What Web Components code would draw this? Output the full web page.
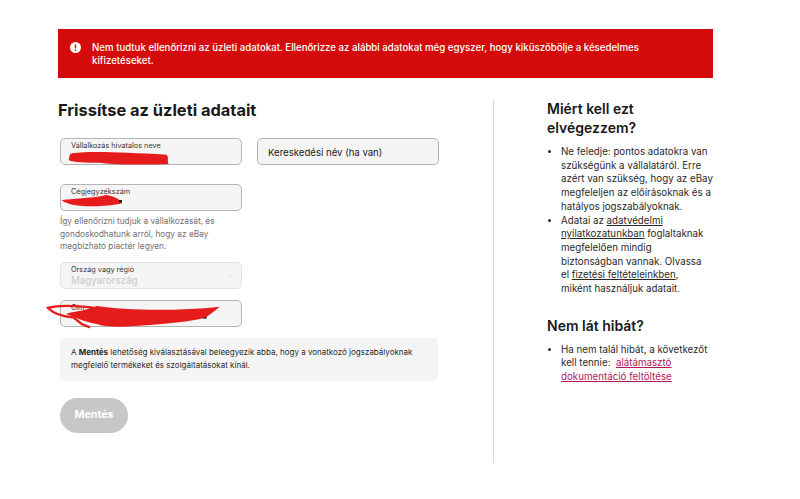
<!DOCTYPE html>
<html lang="hu"><head><meta charset="utf-8"><title>Frissítse az üzleti adatait</title>
<style>
html,body{margin:0;padding:0;background:#fff;}
body{font-family:Inter,"Liberation Sans",sans-serif;color:#191919;width:800px;height:499px;overflow:hidden;}
</style></head><body>
<biz-page>
  <error-banner>Nem tudtuk ellenőrizni az üzleti adatokat. Ellenőrizze az alábbi adatokat még egyszer, hogy kiküszöbölje a késedelmes kifizetéseket.</error-banner>
  <form-pane slot="form"></form-pane>
  <side-pane slot="side"></side-pane>
</biz-page>
<script>
function def(name, html){
  customElements.define(name, class extends HTMLElement{
    constructor(){super();const r=this.attachShadow({mode:'open'});r.innerHTML=html;}
  });
}
def('biz-page',`<style>
:host{display:block;box-sizing:border-box;width:800px;height:499px;padding:29px 87px 0 58px;}
.cols{display:flex;margin-top:22px;}
.l{width:435px;flex:none;}
.r{border-left:1px solid #d8d8d8;padding-left:53px;height:363px;width:166px;flex:none;}
</style><slot></slot><div class="cols"><div class="l"><slot name="form"></slot></div><div class="r"><slot name="side"></slot></div></div>`);
def('error-banner',`<style>
:host{display:flex;box-sizing:border-box;background:#d50b0b;color:#fff;height:49px;padding:12px 20px 0 12px;font-size:9.67px;line-height:12.5px;font-weight:500;}
svg{flex:none;width:11px;height:11px;margin-right:11px;margin-top:1px;}
.t{margin-top:1px;}
</style><svg viewBox="0 0 11 11"><circle cx="5.5" cy="5.5" r="5.5" fill="#fff"/><rect x="4.8" y="2.2" width="1.4" height="4.2" rx=".7" fill="#d50b0b"/><circle cx="5.5" cy="8" r=".85" fill="#d50b0b"/></svg><div class="t"><slot></slot></div>`);
def('text-field',`<style>
:host{display:block;box-sizing:border-box;position:relative;width:182px;height:27px;background:#f5f5f5;border:1px solid #b4b4b4;border-radius:5px;padding:2px 10px 0 10px;}
:host([disabled]){border-color:#e3e3e3;}
.lab{display:block;font-size:7.3px;line-height:9px;color:#363636;}
.val{display:block;font-size:9.8px;line-height:12px;margin-top:1px;color:#c7c7c7;}
:host([plain]){padding-top:1px;}
:host([plain]) .lab{font-size:9.6px;line-height:25px;color:#191919;}
:host([plain]) .val{display:none;}
</style><span class="lab"><slot name="label"></slot></span><span class="val"><slot></slot></span><slot name="icon"></slot>`);
def('form-pane',`<style>
:host{display:block;}
h1{margin:0;font-size:16.4px;line-height:20px;font-weight:700;color:#191919;}
.fields{position:relative;margin-top:18px;}
.row{display:flex;gap:15px;}
.f{margin-left:2px;}
.help{margin:4px 0 0 2px;width:184px;font-size:8.3px;line-height:12.6px;color:#707070;}
.note{box-sizing:border-box;width:378px;height:43px;margin:11px 0 0 2px;background:#f5f5f5;border-radius:5px;padding:8px 11px 0;font-size:8px;line-height:13.6px;color:#292929;}
.note b{font-weight:700;}
button{display:block;margin:17px 0 0 2px;width:68px;height:35px;border:0;border-radius:18px;background:#c7c7c7;color:#fff;font:700 10.7px Inter,"Liberation Sans",sans-serif;padding:0 0 2px;}
.scr{position:absolute;left:0;top:0;width:260px;height:200px;overflow:visible;pointer-events:none;}
</style>
<h1>Frissítse az üzleti adatait</h1>
<div class="fields">
<div class="row f"><text-field><span slot="label">Vállalkozás hivatalos neve</span></text-field><text-field plain><span slot="label">Kereskedési név (ha van)</span></text-field></div>
<div class="row f" style="margin-top:19px"><text-field><span slot="label">Cégjegyzékszám</span></text-field></div>
<p class="help">Így ellenőrizni tudjuk a vállalkozását, és gondoskodhatunk arról, hogy az eBay megbízható piactér legyen.</p>
<div class="f" style="margin-top:9px"><text-field disabled><span slot="label">Ország vagy régió</span>Magyarország<svg slot="icon" viewBox="0 0 9 7" style="position:absolute;right:7px;top:10px;width:7px;height:6px"><path d="M1 1.5l3.5 3.5L8 1.5" fill="none" stroke="#e0e0e0" stroke-width="1"/></svg></text-field></div>
<div class="f" style="margin-top:11px"><text-field><span slot="label">Cím</span></text-field></div>
<svg class="scr" viewBox="0 0 260 200">
<g transform="translate(-8 -118) scale(.3333)">
<path d="M68 400h8v6h-8z" fill="#222"/>
<path d="M60 402 C100 392 200 396 350 404 C358 415 350 420 356 432 C300 435 200 435 150 428 C110 428 70 428 56 420Z" fill="#e61b1b"/>
<path d="M35 540 C80 535 130 535 170 525 C195 530 215 540 215 550 C180 560 110 562 70 555 C50 550 40 545 35 540Z" fill="#e61b1b"/>
<path d="M207 540h9v8h-9z" fill="#222"/>
</g>
<g transform="translate(-18 62) scale(.3333)">
<path d="M488 344h12v12h-12z" fill="#222"/>
<path d="M170 318 C250 330 400 335 540 320 C520 335 510 345 490 355 C420 370 340 375 285 378 C240 382 190 380 170 372 C130 365 100 350 78 342 C90 335 130 335 170 318Z" fill="#e61b1b"/>
<path d="M160 323 C100 316 50 316 24 324 C40 340 70 350 100 352 L125 372 L150 382" fill="none" stroke="#e61b1b" stroke-width="7"/>
</g>
</svg>
</div>
<div class="note">A <b>Mentés</b> lehetőség kiválasztásával beleegyezik abba, hogy a vonatkozó jogszabályoknak megfelelő termékeket és szolgáltatásokat kínál.</div>
<button disabled>Mentés</button>`);
def('side-pane',`<style>
:host{display:block;font-size:9.75px;line-height:13.7px;color:#292929;margin-top:-1px;}
h2{margin:0;font-size:14px;line-height:19px;font-weight:600;color:#191919;}
ul{margin:8px 0 0;padding:0 0 0 14px;width:154px;}
li{margin:0;}
a{color:inherit;text-decoration:underline;}
a.p{color:#b0175f;}
h2.two{margin-top:20px;}
</style>
<h2>Miért kell ezt<br>elvégezzem?</h2>
<ul><li>Ne feledje: pontos adatokra van szükségünk a vállalatáról. Erre azért van szükség, hogy az eBay megfeleljen az előírásoknak és a hatályos jogszabályoknak.</li>
<li>Adatai az <a href="#">adatvédelmi nyilatkozatunkban</a> foglaltaknak megfelelően mindig biztonságban vannak. Olvassa<br>el <a href="#">fizetési feltételeinkben</a>,<br>miként használjuk adatait.</li></ul>
<h2 class="two">Nem lát hibát?</h2>
<ul><li>Ha nem talál hibát, a következőt kell tennie:&nbsp; <a class="p" href="#">alátámasztó dokumentáció feltöltése</a></li></ul>`);
</script>
</body></html>
